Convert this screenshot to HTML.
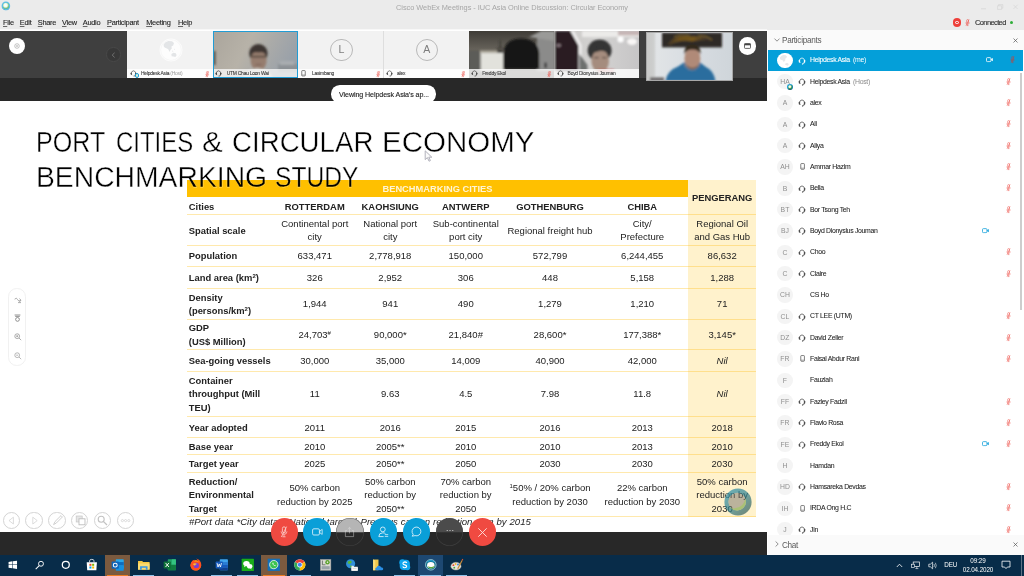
<!DOCTYPE html>
<html><head><meta charset="utf-8"><title>Cisco WebEx Meetings</title>
<style>

html,body{margin:0;padding:0;background:#fff;}
body{width:1024px;height:576px;overflow:hidden;font-family:"Liberation Sans",sans-serif;}
#root{filter:blur(0.45px);position:relative;width:1024px;height:576px;overflow:hidden;background:#fff;}
.abs{position:absolute;}
svg{display:block;overflow:visible;}


#titlebar{left:0;top:0;width:1024px;height:30px;background:#ebebeb;}
#wtitle{left:0;top:2.5px;width:1024px;text-align:center;font-size:7.4px;color:#a6a6a6;letter-spacing:-0.05px;}
#menu{left:0;top:17.5px;font-size:7.4px;color:#1e1e1e;white-space:nowrap;letter-spacing:-0.28px;-webkit-text-stroke:0.1px #1e1e1e;}
#menu span{position:absolute;top:0;}
#menu u{text-decoration-thickness:0.45px;text-underline-offset:0.5px;text-decoration-color:#666;}
#conn{left:975px;top:17.6px;font-size:7.5px;color:#333;letter-spacing:-0.62px;white-space:nowrap;-webkit-text-stroke:0.12px #333;}
#rec{left:952.6px;top:18.2px;width:8.4px;height:8.4px;border-radius:50%;background:#ee3f3a;}
#rec:after{content:"";position:absolute;left:2.7px;top:2.7px;width:1.6px;height:1.6px;border-radius:50%;border:0.7px solid #fff;}
#gdot{left:1010.3px;top:20.9px;width:3px;height:3px;border-radius:50%;background:#2fae3a;}


#vstrip{left:0;top:30.5px;width:767px;height:47.8px;background:#3f3f3f;}
#vhl{left:0;top:29.4px;width:767px;height:1.1px;background:#f7f7f7;}
#vdark{left:0;top:78.2px;width:767px;height:22.6px;background:#282828;}
.tile{top:30.5px;height:47.7px;background:#f2f2f2;overflow:hidden;}
.tile .nb{position:absolute;left:0;bottom:0;width:100%;height:9.2px;background:#fdfdfd;}
.tile .nbv{position:absolute;left:0;bottom:0;width:100%;height:9.6px;background:rgba(255,255,255,0.72);}
.tile .tn{position:absolute;left:13.8px;bottom:1.5px;font-size:4.95px;line-height:6px;color:#333;white-space:nowrap;letter-spacing:-0.24px;-webkit-text-stroke:0.08px #333;}
.tile .tn em{font-style:normal;color:#999;-webkit-text-stroke:0;}
.tile svg{position:absolute;}
.ring{position:absolute;border-radius:50%;border:0.6px solid #b9b9b9;width:20.4px;height:20.4px;left:32px;top:8.6px;text-align:center;font-size:10.6px;line-height:19.6px;color:#7d7d7d;}
#lcirc{left:8.6px;top:37.5px;width:16.8px;height:16.8px;border-radius:50%;background:#fff;}
#rcirc{left:738.6px;top:37.2px;width:17.4px;height:17.4px;border-radius:50%;background:#fff;}
#chev{left:106.4px;top:47.4px;width:12.6px;height:12.6px;border-radius:50%;background:#383838;border:0.6px solid #484848;}
#pill{left:330.6px;top:85.3px;width:105.8px;height:17.5px;border-radius:8.8px;background:#fff;box-shadow:0 0 1px rgba(0,0,0,0.25);}
#pill div{position:absolute;left:8.2px;top:4.6px;transform:translateY(0.6px) rotate(0.001deg);font-size:7.1px;line-height:8px;color:#222;white-space:nowrap;letter-spacing:-0.08px;-webkit-text-stroke:0.12px #222;}


#slide{left:0;top:100.6px;width:767px;height:432px;background:#fff;}
#stitle{left:35.6px;top:123.5px;font-size:29px;line-height:34.6px;color:#111;white-space:nowrap;transform-origin:0 0;}
#stitle div{transform-origin:0 0;}


#tbl{left:0;top:0;font-size:9.5px;color:#222;}
#tbl .hd{left:187px;top:180px;width:501px;height:17.2px;background:#ffc000;color:#fff5d6;font-weight:bold;text-align:center;line-height:19px;font-size:9.3px;}
#tbl .pcol{left:688px;top:180px;width:68.3px;height:336.5px;background:#fff2cc;}
#tbl .ln{left:187px;width:569.3px;height:1.1px;background:#ffe9ad;}
#tbl .lnp{left:688px;width:68.3px;height:1.1px;background:#ffdf8c;}
#tbl .r{left:187px;width:569.3px;}
#tbl .c{position:absolute;top:0;height:100%;box-sizing:border-box;padding-top:1.1px;display:flex;align-items:center;justify-content:center;text-align:center;line-height:13.5px;white-space:nowrap;}
#tbl .l{position:absolute;top:0;left:1.8px;height:100%;box-sizing:border-box;padding-top:1.1px;font-size:9.4px;display:flex;align-items:center;font-weight:bold;line-height:13.5px;white-space:nowrap;}
#tbl .b{font-weight:bold;font-size:9.4px;}
#tbl sup{font-size:6px;line-height:0;vertical-align:3.2px;}
#tbl i{font-style:italic;}
#foot{left:189px;top:515.6px;font-size:9.6px;word-spacing:0.25px;font-style:italic;color:#222;white-space:nowrap;line-height:12px;}


.stt{left:0;top:0;font-size:29.6px;line-height:34.7px;color:#000;white-space:nowrap;-webkit-text-stroke:0.42px #fff;}
.stt span{position:absolute;transform-origin:0 0;display:block;}
#stclip{left:187px;top:180px;width:501px;height:17.2px;overflow:hidden;}
#stclip .stt{left:-187px;top:-180px;-webkit-text-stroke:0.42px #ffc000;}


#panel{left:767.6px;top:30px;width:256.4px;height:525px;background:#fff;}
#phead{left:767.6px;top:30px;width:256.4px;height:19.7px;background:#fafafa;}
#phead .t,#chead .t{position:absolute;left:14.6px;top:5.2px;transform:translateY(1.2px) rotate(0.001deg);font-size:8.2px;color:#5a5a5a;letter-spacing:-0.3px;white-space:nowrap;}
#chead{left:767.6px;top:535.3px;width:256.4px;height:19.5px;background:#fafafa;}
#prow0{left:768.4px;top:49.7px;width:254.8px;height:21.1px;background:#049fd9;}
#pscroll{left:1020px;top:73px;width:2.2px;height:237px;background:#cdcdcd;}
.pr{left:768px;width:252px;height:21.33px;}
.pr .av{position:absolute;left:9.2px;top:2.9px;width:15.6px;height:15.6px;border-radius:50%;background:#f4f4f4;color:#8e8e8e;font-size:6.8px;line-height:16px;text-align:center;letter-spacing:0.1px;}
.pr .nm{position:absolute;left:41.8px;top:6.6px;transform:translateY(0.15px) rotate(0.001deg);font-size:6.9px;line-height:8px;color:#1c1c1c;white-space:nowrap;letter-spacing:-0.3px;-webkit-text-stroke:0.06px #1c1c1c;}
.pr .nm em{font-style:normal;color:#8a8a8a;-webkit-text-stroke:0;margin-left:1.6px;}
.pr svg{position:absolute;}
.pr .hs{left:29.6px;top:7.1px;}
.pr .ph{left:31.6px;top:7px;}
.pr .mic{left:238.4px;top:6.8px;}
.pr .cam{left:217.6px;top:7.8px;}
.sel .nm{color:#fff;-webkit-text-stroke:0.1px #fff;}
.sel .nm em{color:#fff;}


#bdark{left:0;top:532.3px;width:767px;height:23px;background:#282828;}
#taskbar{left:0;top:554.7px;width:1024px;height:22px;background:#082c49;}
.cb{top:518px;width:27.6px;height:27.6px;border-radius:50%;}
.cb svg{position:absolute;}
.tc{top:512px;width:17.2px;height:17.2px;border-radius:50%;border:0.7px solid #d4d4d4;box-sizing:border-box;}
.tc svg{position:absolute;left:0;top:0;}
#lpill{left:8.3px;top:287.8px;width:17.4px;height:78.4px;border-radius:8.7px;border:0.7px solid #f1f1f1;box-sizing:border-box;background:#fff;}
#lpill svg{position:absolute;}
.tb{position:absolute;top:0;height:21.3px;width:25.4px;}
.tb .ul{position:absolute;left:2.2px;right:2.2px;bottom:0;height:1.2px;background:#8fc3ea;}
.tb svg{position:absolute;left:5.9px;top:3.2px;}
#tray{color:#fff;font-size:6.3px;white-space:nowrap;letter-spacing:-0.1px;}
#tray div{position:absolute;text-align:center;}

</style></head>
<body>
<div id="root">

<div id="titlebar" class="abs"></div>
<div id="wtitle" class="abs">Cisco WebEx Meetings - IUC Asia Online Discussion: Circular Economy</div>
<svg class="abs" style="left:1px;top:1px" width="10" height="10" viewBox="0 0 10 10"><defs><radialGradient id="wb" cx="0.45" cy="0.4" r="0.6"><stop offset="0" stop-color="#fff"/><stop offset="0.45" stop-color="#f4fbf0"/><stop offset="0.75" stop-color="#a9d89a"/><stop offset="1" stop-color="#5fae4e"/></radialGradient></defs><circle cx="4.9" cy="4.9" r="4.3" fill="#5bbfe8"/><path d="M0.8 6A4.3 4.3 0 0 0 9 6.4Q7 9.2 4.6 9.2Q2 9 0.8 6Z" fill="#2f8fb8" opacity="0.7"/><circle cx="4.9" cy="4.8" r="3" fill="url(#wb)"/></svg>
<div id="menu" class="abs"><span style="left:3px"><u>F</u>ile</span><span style="left:19.8px"><u>E</u>dit</span><span style="left:37.8px"><u>S</u>hare</span><span style="left:62px"><u>V</u>iew</span><span style="left:82.8px"><u>A</u>udio</span><span style="left:107px"><u>P</u>articipant</span><span style="left:146.2px"><u>M</u>eeting</span><span style="left:178px"><u>H</u>elp</span></div>
<div id="rec" class="abs"></div><svg class="abs" style="left:965px;top:18.6px;color:#ee4f48" width="5" height="7.5"><use href="#mic"/></svg><div id="conn" class="abs">Connected</div><div id="gdot" class="abs"></div>
<svg class="abs" style="left:980px;top:3px" width="40" height="9"><path d="M1 5.8H6" stroke="#d2d2d2" stroke-width="0.7"/><path d="M17.6 2.8H21.6V6.4H17.6ZM18.6 2.8V1.6H22.8V5.2H21.6" fill="none" stroke="#d2d2d2" stroke-width="0.6"/><path d="M33.4 1.8L37.6 6M37.6 1.8L33.4 6" stroke="#d2d2d2" stroke-width="0.6"/></svg>

<div id="vhl" class="abs"></div><div id="vstrip" class="abs"></div><div id="vdark" class="abs"></div>
<div id="lcirc" class="abs"><svg style="position:absolute;left:5.4px;top:5.4px" width="6" height="6"><circle cx="3" cy="3" r="2.3" fill="none" stroke="#8a8a8a" stroke-width="0.5"/><circle cx="3" cy="3" r="0.7" fill="none" stroke="#8a8a8a" stroke-width="0.4"/></svg></div>
<div id="chev" class="abs"><svg style="position:absolute;left:3.8px;top:3.2px" width="5" height="6"><path d="M3.6 0.8L1.2 3.1L3.6 5.4" fill="none" stroke="#777" stroke-width="0.9"/></svg></div>
<div class="tile abs" style="left:127.2px;width:85.4px"><svg style="left:31.4px;top:7.1px" width="24" height="24" viewBox="0 0 24 24"><circle cx="12" cy="12" r="11.1" fill="#f6f6f6" stroke="#fdfdfd" stroke-width="0.7"/><circle cx="12" cy="12" r="9.9" fill="#fdfdfd"/><path d="M4.6 6.6Q6 3.6 9.4 2.9L13 3.2L15 5L14.2 7.4L12.4 8.6L12.8 10.6L11.4 12L10.6 14L9.4 11.6L8 10.4L6 9.8L4.8 8.4Z M12.4 16L14.4 14.8L16.8 15.2L17.6 17.2L16.4 19L14.4 18.4L12.6 18.2Z M12.8 12.4L14.4 13L13.8 14Z M15 10.6L16 11.4L15.2 12Z" fill="#e3e5e7"/></svg><div class="nb"></div><svg style="left:2.4px;bottom:1.2px;color:#444" width="7" height="7"><use href="#hs"/></svg><div style="position:absolute;left:7.4px;bottom:0.6px;width:2.6px;height:2.6px;border-radius:50%;background:#dff0d8;border:0.9px solid #1b9fd8"></div><div class="tn">Helpdesk Asia <em>(Host)</em></div><svg style="left:77.8px;bottom:0.9px;color:#ee5a52" width="4.4" height="6.6"><use href="#mic"/></svg></div>
<div class="tile abs" style="left:212.9px;width:85.3px;background:#a9a8a4"><svg style="left:0;top:0" width="85.3" height="48" viewBox="0 0 85.3 48"><defs><filter id="b1" x="-10%" y="-10%" width="120%" height="120%"><feGaussianBlur stdDeviation="0.9"/></filter><filter id="b2" x="-10%" y="-10%" width="120%" height="120%"><feGaussianBlur stdDeviation="1.6"/></filter><linearGradient id="g2" x1="0" y1="0" x2="1" y2="0.3"><stop offset="0" stop-color="#aaa59c"/><stop offset="0.45" stop-color="#b7b2a8"/><stop offset="1" stop-color="#9aa1a9"/></linearGradient></defs><rect width="85.3" height="48" fill="url(#g2)"/><g filter="url(#b1)"><rect x="0" y="20" width="2.6" height="14" fill="#55564f"/><rect x="65" y="33" width="20" height="8" fill="#8d9296"/><rect x="67" y="30" width="14" height="4" fill="#a9adb0"/><ellipse cx="45.4" cy="22.4" rx="9.2" ry="9.4" fill="#3c3632"/><ellipse cx="45.6" cy="29.6" rx="8" ry="10.4" fill="#967d6e"/><path d="M37.4 22.6Q40 18.4 45.6 19Q51.4 18.4 53.8 22.6Q49 20.6 45.6 21.4Q41 20.8 37.4 22.6Z" fill="#3c3632"/><rect x="38.6" y="24.8" width="14" height="1.7" fill="#4c3f38" opacity="0.85"/><path d="M42.6 33.6H48.6" stroke="#6e5148" stroke-width="1" opacity="0.7"/><path d="M30 48Q32 38 44 37Q58 38 60 48Z" fill="#c9c6c0"/></g></svg><div class="nbv"></div><svg style="left:2.2px;bottom:1.2px;color:#333" width="7" height="7"><use href="#hs"/></svg><div class="tn">UTM Chau Loon Wai</div><div style="position:absolute;left:0;top:0;right:0;bottom:0;border:1.3px solid #219cd5"></div></div>
<div class="tile abs" style="left:298.2px;width:85.1px;border-right:0.5px solid #dedede"><div class="ring">L</div><div class="nb"></div><svg style="left:2.4px;bottom:1.2px;color:#444" width="5" height="6.8"><use href="#ph"/></svg><div class="tn" style="left:13.8px">Lasimbang</div><svg style="left:77.4px;bottom:0.9px;color:#ee5a52" width="4.4" height="6.6"><use href="#mic"/></svg></div>
<div class="tile abs" style="left:383.7px;width:85.1px"><div class="ring">A</div><div class="nb"></div><svg style="left:2.2px;bottom:1.2px;color:#444" width="7" height="7"><use href="#hs"/></svg><div class="tn" style="left:13.4px">alex</div><svg style="left:77.4px;bottom:0.9px;color:#ee5a52" width="4.4" height="6.6"><use href="#mic"/></svg></div>
<div class="tile abs" style="left:468.8px;width:85.4px;background:#6d695f"><svg style="left:0;top:0" width="85.4" height="48" viewBox="0 0 85.4 48"><defs><linearGradient id="g5" x1="0" y1="0" x2="0" y2="1"><stop offset="0" stop-color="#3f3c37"/><stop offset="0.38" stop-color="#66625a"/><stop offset="0.5" stop-color="#5c5952"/><stop offset="1" stop-color="#4a4845"/></linearGradient></defs><rect width="85.4" height="48" fill="url(#g5)"/><g filter="url(#b1)"><rect x="0" y="20" width="11" height="20" fill="#5c5c59"/><rect x="11.6" y="22" width="23" height="18" fill="#e2e2dc"/><rect x="11" y="19.6" width="25" height="2.2" fill="#b9b4a6"/><rect x="68" y="6" width="18" height="34" fill="#8b8b8a"/><path d="M60 6L72 0H86V10Z" fill="#9a9a98"/><path d="M31.2 9V16M27.4 19L31.2 16L35.8 19" stroke="#3c3934" stroke-width="1.3" fill="none"/><ellipse cx="31.2" cy="20.4" rx="3.2" ry="1.6" fill="#3f3c38"/><path d="M34.4 38V22Q35.4 8 52 7.6Q68.6 8 70.2 22V38Z" fill="#171615"/><rect x="75.4" y="31.6" width="2.4" height="5.4" fill="#3c3c3c"/></g></svg><div class="nbv" style="background:rgba(255,255,255,0.8)"></div><svg style="left:2.4px;bottom:1.2px;color:#444" width="7" height="7"><use href="#hs"/></svg><div class="tn" style="left:13.4px;color:#444">Freddy Ekol</div><svg style="left:78.2px;bottom:0.9px;color:#ee5a52" width="4.4" height="6.6"><use href="#mic"/></svg></div>
<div class="tile abs" style="left:554.2px;width:85.3px;background:#d6d4d2"><svg style="left:0;top:0" width="85.3" height="48" viewBox="0 0 85.3 48"><defs><linearGradient id="g6" x1="0" y1="0" x2="1" y2="0"><stop offset="0" stop-color="#c6c4c2"/><stop offset="0.5" stop-color="#d4d3d2"/><stop offset="1" stop-color="#c6c5c6"/></linearGradient></defs><rect width="85.3" height="48" fill="url(#g6)"/><g filter="url(#b1)"><rect x="0" y="0" width="1" height="40" fill="#a9a9a7"/><path d="M1 0H16.4L24.6 14.6V40H1Z" fill="#2a1d22"/><ellipse cx="4.6" cy="14.4" rx="2.6" ry="1.8" fill="#8c7d84" opacity="0.8"/><path d="M16.4 0H20L27.6 14V40H24.6V14.6Z" fill="#efeeee"/><path d="M25.4 40V23L33.4 34V40Z" fill="#6d6f6e"/><rect x="28" y="0" width="57" height="6" fill="#ecebe9"/><ellipse cx="66.6" cy="8.6" rx="3.2" ry="3" fill="#fff"/><ellipse cx="78" cy="10.6" rx="5" ry="3.4" fill="#f8f6f5"/><rect x="64" y="0" width="22" height="4.4" fill="#b9a3a3" opacity="0.75"/><ellipse cx="45.6" cy="19.6" rx="12" ry="11" fill="#343435"/><ellipse cx="46.2" cy="30" rx="8.8" ry="11.6" fill="#a58c7e"/><path d="M36.6 23Q38 15.4 46 15.6Q54 15.4 55.4 23Q50 18.4 44 20.4Q40 21 36.6 23Z" fill="#343435"/><path d="M40.2 26.6H44.6M48.2 26.6H52.4" stroke="#4a3c36" stroke-width="1.2" opacity="0.8"/><rect x="44" y="38" width="16" height="4" fill="#c7595a" opacity="0.6"/></g></svg><div class="nbv" style="background:rgba(255,255,255,0.8)"></div><svg style="left:2.4px;bottom:1.2px;color:#444" width="7" height="7"><use href="#hs"/></svg><div class="tn" style="left:13.4px;color:#3c3c3c">Boyd Dionysius Jouman</div></div>
<div class="abs" style="left:645.8px;top:31.9px;width:87.4px;height:49.2px;background:#dcdfe2;overflow:hidden"><svg style="position:absolute;left:0;top:0" width="87.4" height="49.2" viewBox="0 0 87.4 49.2"><defs><linearGradient id="g7" x1="0" y1="0" x2="1" y2="0"><stop offset="0" stop-color="#c9cbcc"/><stop offset="0.12" stop-color="#e1e4e6"/><stop offset="0.5" stop-color="#d8dde2"/><stop offset="1" stop-color="#cfd5da"/></linearGradient><linearGradient id="g7b" x1="0" y1="0" x2="1" y2="0"><stop offset="0" stop-color="#3b3128"/><stop offset="0.25" stop-color="#6d521f"/><stop offset="0.55" stop-color="#75571e"/><stop offset="0.8" stop-color="#43362a"/><stop offset="1" stop-color="#2c2826"/></linearGradient></defs><rect width="87.4" height="49.2" fill="url(#g7)"/><g filter="url(#b1)"><rect x="0" y="0" width="9" height="48" fill="#c4c4c3" opacity="0.6"/><rect x="16" y="0.6" width="60" height="14.8" fill="#2e2a28"/><path d="M21 12Q30 2 44 4.6Q58 2.6 69 9.6Q58 7 46 9.4Q33 7 24 13.4Z" fill="url(#g7b)"/><path d="M28 5Q36 1.6 44 4M52 4Q60 3 66 8" stroke="#b08a2e" stroke-width="1.1" fill="none" opacity="0.6"/><rect x="4" y="45.4" width="14" height="3.8" fill="#6d6a6c"/><path d="M19.4 49.2Q21 38.6 32 34.6L38 30.6H54L60 35Q68 38.6 69.6 49.2Z" fill="#2c6d9e"/><path d="M37.6 33Q46 44 54.4 33L52 30H40Z" fill="#6f7f92"/><ellipse cx="46.4" cy="26.4" rx="8" ry="10.4" fill="#b08a78"/><path d="M38.2 22.4Q38 12.4 46.4 12.6Q55 12.4 54.6 22.4Q52 17.4 46.4 17.6Q40.6 17.4 38.2 22.4Z" fill="#33291f"/><path d="M40.6 33Q46.4 38.6 52.4 33Q52 36.4 46.4 37.4Q41 36.4 40.6 33Z" fill="#6b5144" opacity="0.8"/></g></svg><div style="position:absolute;left:0;top:0;right:0;bottom:0;border:0.8px solid #a8a8a8"></div></div>
<div id="rcirc" class="abs"><svg style="position:absolute;left:5.2px;top:5.6px" width="7" height="6"><rect x="0.5" y="0.6" width="6" height="4.8" rx="0.7" fill="none" stroke="#444" stroke-width="0.8"/><rect x="0.5" y="0.6" width="6" height="1.7" fill="#444"/></svg></div>
<div id="pill" class="abs"><div>Viewing Helpdesk Asia's ap...</div></div>

<div id="slide" class="abs"></div>

<div id="tbl" class="abs">
<div class="abs pcol"></div>
<div class="abs hd">BENCHMARKING CITIES</div>
<div class="abs c b" style="left:688px;top:180px;width:68.3px;height:34.5px;">PENGERANG</div>
<div class="abs r" style="top:197.2px;height:17.3px"><div class="l"><span>Cities</span></div><div class="c" style="left:90px;width:75.5px"><span><span class="b">ROTTERDAM</span></span></div><div class="c" style="left:165.5px;width:75.5px"><span><span class="b">KAOHSIUNG</span></span></div><div class="c" style="left:241px;width:75.5px"><span><span class="b">ANTWERP</span></span></div><div class="c" style="left:316.5px;width:93px"><span><span class="b">GOTHENBURG</span></span></div><div class="c" style="left:409.5px;width:91.5px"><span><span class="b">CHIBA</span></span></div></div>
<div class="abs r" style="top:214.5px;height:30.5px"><div class="l"><span>Spatial scale</span></div><div class="c" style="left:90px;width:75.5px"><span>Continental port<br>city</span></div><div class="c" style="left:165.5px;width:75.5px"><span>National port<br>city</span></div><div class="c" style="left:241px;width:75.5px"><span>Sub-continental<br>port city</span></div><div class="c" style="left:316.5px;width:93px"><span>Regional freight hub</span></div><div class="c" style="left:409.5px;width:91.5px"><span>City/<br>Prefecture</span></div><div class="c" style="left:501px;width:68.3px"><span>Regional Oil<br>and Gas Hub</span></div></div>
<div class="abs r" style="top:245px;height:21px"><div class="l"><span>Population</span></div><div class="c" style="left:90px;width:75.5px"><span>633,471</span></div><div class="c" style="left:165.5px;width:75.5px"><span>2,778,918</span></div><div class="c" style="left:241px;width:75.5px"><span>150,000</span></div><div class="c" style="left:316.5px;width:93px"><span>572,799</span></div><div class="c" style="left:409.5px;width:91.5px"><span>6,244,455</span></div><div class="c" style="left:501px;width:68.3px"><span>86,632</span></div></div>
<div class="abs r" style="top:266px;height:22px"><div class="l"><span>Land area (km<sup>2</sup>)</span></div><div class="c" style="left:90px;width:75.5px"><span>326</span></div><div class="c" style="left:165.5px;width:75.5px"><span>2,952</span></div><div class="c" style="left:241px;width:75.5px"><span>306</span></div><div class="c" style="left:316.5px;width:93px"><span>448</span></div><div class="c" style="left:409.5px;width:91.5px"><span>5,158</span></div><div class="c" style="left:501px;width:68.3px"><span>1,288</span></div></div>
<div class="abs r" style="top:288px;height:31px"><div class="l"><span>Density<br>(persons/km<sup>2</sup>)</span></div><div class="c" style="left:90px;width:75.5px"><span>1,944</span></div><div class="c" style="left:165.5px;width:75.5px"><span>941</span></div><div class="c" style="left:241px;width:75.5px"><span>490</span></div><div class="c" style="left:316.5px;width:93px"><span>1,279</span></div><div class="c" style="left:409.5px;width:91.5px"><span>1,210</span></div><div class="c" style="left:501px;width:68.3px"><span>71</span></div></div>
<div class="abs r" style="top:319px;height:30.5px"><div class="l"><span>GDP<br>(US$ Million)</span></div><div class="c" style="left:90px;width:75.5px"><span>24,703<sup>#</sup></span></div><div class="c" style="left:165.5px;width:75.5px"><span>90,000*</span></div><div class="c" style="left:241px;width:75.5px"><span>21,840#</span></div><div class="c" style="left:316.5px;width:93px"><span>28,600*</span></div><div class="c" style="left:409.5px;width:91.5px"><span>177,388*</span></div><div class="c" style="left:501px;width:68.3px"><span>3,145*</span></div></div>
<div class="abs r" style="top:349.5px;height:21.5px"><div class="l"><span>Sea-going vessels</span></div><div class="c" style="left:90px;width:75.5px"><span>30,000</span></div><div class="c" style="left:165.5px;width:75.5px"><span>35,000</span></div><div class="c" style="left:241px;width:75.5px"><span>14,009</span></div><div class="c" style="left:316.5px;width:93px"><span>40,900</span></div><div class="c" style="left:409.5px;width:91.5px"><span>42,000</span></div><div class="c" style="left:501px;width:68.3px"><span><i>Nil</i></span></div></div>
<div class="abs r" style="top:371px;height:45px"><div class="l"><span>Container<br>throughput (Mill<br>TEU)</span></div><div class="c" style="left:90px;width:75.5px"><span>11</span></div><div class="c" style="left:165.5px;width:75.5px"><span>9.63</span></div><div class="c" style="left:241px;width:75.5px"><span>4.5</span></div><div class="c" style="left:316.5px;width:93px"><span>7.98</span></div><div class="c" style="left:409.5px;width:91.5px"><span>11.8</span></div><div class="c" style="left:501px;width:68.3px"><span><i>Nil</i></span></div></div>
<div class="abs r" style="top:416px;height:21.5px"><div class="l"><span>Year adopted</span></div><div class="c" style="left:90px;width:75.5px"><span>2011</span></div><div class="c" style="left:165.5px;width:75.5px"><span>2016</span></div><div class="c" style="left:241px;width:75.5px"><span>2015</span></div><div class="c" style="left:316.5px;width:93px"><span>2016</span></div><div class="c" style="left:409.5px;width:91.5px"><span>2013</span></div><div class="c" style="left:501px;width:68.3px"><span>2018</span></div></div>
<div class="abs r" style="top:437.5px;height:17.0px"><div class="l"><span>Base year</span></div><div class="c" style="left:90px;width:75.5px"><span>2010</span></div><div class="c" style="left:165.5px;width:75.5px"><span>2005**</span></div><div class="c" style="left:241px;width:75.5px"><span>2010</span></div><div class="c" style="left:316.5px;width:93px"><span>2010</span></div><div class="c" style="left:409.5px;width:91.5px"><span>2013</span></div><div class="c" style="left:501px;width:68.3px"><span>2010</span></div></div>
<div class="abs r" style="top:454.5px;height:17.5px"><div class="l"><span>Target year</span></div><div class="c" style="left:90px;width:75.5px"><span>2025</span></div><div class="c" style="left:165.5px;width:75.5px"><span>2050**</span></div><div class="c" style="left:241px;width:75.5px"><span>2050</span></div><div class="c" style="left:316.5px;width:93px"><span>2030</span></div><div class="c" style="left:409.5px;width:91.5px"><span>2030</span></div><div class="c" style="left:501px;width:68.3px"><span>2030</span></div></div>
<div class="abs r" style="top:472px;height:44.5px"><div class="l"><span>Reduction/<br>Environmental<br>Target</span></div><div class="c" style="left:90px;width:75.5px"><span>50% carbon<br>reduction by 2025</span></div><div class="c" style="left:165.5px;width:75.5px"><span>50% carbon<br>reduction by<br>2050**</span></div><div class="c" style="left:241px;width:75.5px"><span>70% carbon<br>reduction by<br>2050</span></div><div class="c" style="left:316.5px;width:93px"><span><span><sup>1</sup>50% / 20% carbon<br>reduction by 2030</span></span></div><div class="c" style="left:409.5px;width:91.5px"><span>22% carbon<br>reduction by 2030</span></div><div class="c" style="left:501px;width:68.3px"><span>50% carbon<br>reduction by<br>2030</span></div></div>
<div class="abs ln" style="top:214.0px"></div><div class="abs lnp" style="top:214.0px"></div><div class="abs ln" style="top:244.5px"></div><div class="abs lnp" style="top:244.5px"></div><div class="abs ln" style="top:265.5px"></div><div class="abs lnp" style="top:265.5px"></div><div class="abs ln" style="top:287.5px"></div><div class="abs lnp" style="top:287.5px"></div><div class="abs ln" style="top:318.5px"></div><div class="abs lnp" style="top:318.5px"></div><div class="abs ln" style="top:349.0px"></div><div class="abs lnp" style="top:349.0px"></div><div class="abs ln" style="top:370.5px"></div><div class="abs lnp" style="top:370.5px"></div><div class="abs ln" style="top:415.5px"></div><div class="abs lnp" style="top:415.5px"></div><div class="abs ln" style="top:437.0px"></div><div class="abs lnp" style="top:437.0px"></div><div class="abs ln" style="top:454.0px"></div><div class="abs lnp" style="top:454.0px"></div><div class="abs ln" style="top:471.5px"></div><div class="abs lnp" style="top:471.5px"></div><div class="abs ln" style="top:516.0px"></div><div class="abs lnp" style="top:516.0px"></div>
</div>
<div id="foot" class="abs">#Port data *City data **National target <sup style="font-size:6px;line-height:0;vertical-align:3px">1</sup> Previous carbon reduction plan by 2015</div>

<div class="stt abs"><span style="left:36.3px;top:124.9px;transform:scaleX(0.848)">PORT</span><span style="left:115.94px;top:124.9px;transform:scaleX(0.809)">CITIES</span><span style="left:201.95px;top:124.9px;transform:scaleX(1.05)">&amp;</span><span style="left:232.07px;top:124.9px;transform:scaleX(0.9346)">CIRCULAR</span><span style="left:382px;top:124.9px;transform:scaleX(0.9967)">ECONOMY</span><span style="left:36.1px;top:159.6px;transform:scaleX(0.956)">BENCHMARKING</span><span style="left:275.4px;top:159.6px;transform:scaleX(0.8316)">STUDY</span></div>
<div id="stclip" class="abs"><div class="stt abs"><span style="left:36.1px;top:159.6px;transform:scaleX(0.956)">BENCHMARKING</span><span style="left:275.4px;top:159.6px;transform:scaleX(0.8316)">STUDY</span></div></div>
<svg class="abs" style="left:424px;top:150.4px" width="10" height="13" viewBox="0 0 10 13"><path d="M1.2 0.8V9.6L3.4 7.6L5 11.2L6.4 10.6L4.8 7.2H7.8Z" fill="#fafafa" stroke="#a9a9b4" stroke-width="0.9" stroke-linejoin="round"/></svg>
<svg class="abs" style="left:723.6px;top:488.4px" width="28" height="28" viewBox="0 0 28 28"><defs><linearGradient id="bg1" x1="0.15" y1="0.1" x2="0.85" y2="0.9"><stop offset="0" stop-color="#2a8ea8"/><stop offset="0.5" stop-color="#2f7f8c"/><stop offset="1" stop-color="#345e58"/></linearGradient></defs><path fill-rule="evenodd" d="M14 0.4A13.6 13.6 0 1 0 14 27.6A13.6 13.6 0 1 0 14 0.4ZM13.2 4.8A8.8 8.8 0 1 1 13.2 22.4A8.8 8.8 0 1 1 13.2 4.8Z" fill="url(#bg1)" opacity="0.7"/><circle cx="13.2" cy="13.6" r="8.8" fill="#77736c" opacity="0.5"/><path d="M13.2 22.4A8.8 8.8 0 0 0 22 13.6Q22 11.6 21.2 10.4Q20.4 19 10 20.6Q7.4 20.6 5.6 18.2Q8 22.4 13.2 22.4Z" fill="#a3c765" opacity="0.7"/></svg>

<svg width="0" height="0" style="position:absolute"><defs>
<symbol id="hs" viewBox="0 0 8 8"><path d="M2.3 5.9A2.7 2.7 0 1 1 5.7 5.9" fill="none" stroke="currentColor" stroke-width="0.75"/><rect x="0.8" y="3" width="1.35" height="2.5" rx="0.55" fill="currentColor"/><rect x="5.85" y="3" width="1.35" height="2.5" rx="0.55" fill="currentColor"/><path d="M6.5 5.2Q6.4 6.9 4.7 6.9" fill="none" stroke="currentColor" stroke-width="0.65"/><circle cx="4.5" cy="6.9" r="0.55" fill="currentColor"/></symbol>
<symbol id="ph" viewBox="0 0 6 8"><rect x="0.9" y="0.6" width="4.2" height="6.6" rx="0.8" fill="none" stroke="currentColor" stroke-width="0.8"/><path d="M1 5.9H5" stroke="currentColor" stroke-width="0.5"/></symbol>
<symbol id="mic" viewBox="0 0 6 9"><rect x="2" y="0.7" width="2.2" height="4.4" rx="1.1" fill="none" stroke="currentColor" stroke-width="0.7"/><path d="M0.9 4.2Q1 6.4 3.1 6.4Q5.1 6.4 5.2 4.2M3.1 6.4V8M2 8H4.2" fill="none" stroke="currentColor" stroke-width="0.6"/><path d="M4.9 0.4L1.2 8" stroke="currentColor" stroke-width="0.7"/></symbol>
<symbol id="cam" viewBox="0 0 8 6"><rect x="0.5" y="0.7" width="4.8" height="4.4" rx="1" fill="none" stroke="currentColor" stroke-width="0.9"/><path d="M5.6 2.2L7.4 1.1V4.7L5.6 3.6Z" fill="currentColor"/></symbol>
</defs></svg>
<div id="panel" class="abs"></div><div id="prow0" class="abs"></div><div id="pscroll" class="abs"></div>
<div class="pr abs sel" style="top:49.67px"><div class="av" style="background:#fff"><svg width="15.6" height="15.6" viewBox="0 0 16 16" style="left:0;top:0"><path d="M3 4.6Q4.4 2.4 6.6 2L9 2.2L10.2 3.6L9.6 5.2L8.4 6L8.6 7.4L7.6 8.4L7 9.6L6.2 8L5.2 7.2L3.8 6.8L3 5.8Z M8.4 11L9.8 10.2L11.4 10.4L12 11.8L11.2 13L9.8 12.6L8.6 12.4Z" fill="#e6e8ea"/></svg></div><svg class="hs" width="8" height="8" style="color:#fff"><use href="#hs"/></svg><div class="nm">Helpdesk Asia <em>(me)</em></div><svg class="cam" width="7.4" height="5.5" style="color:#fff"><use href="#cam"/></svg><svg class="mic" width="5" height="7.5" style="color:#c4473f;left:242.2px"><use href="#mic"/></svg></div>
<div class="pr abs" style="top:71.0px"><div class="av">HA</div><div style="position:absolute;left:18.6px;top:12.9px;width:4.2px;height:4.2px;border-radius:50%;background:radial-gradient(circle at 45% 40%,#fff 0,#eaf6e0 30%,#5aa848 60%,#1c7a55 100%);border:1.1px solid #1b9fd8;border-bottom-color:#0e5c70;border-right-color:#137fa6"></div><svg class="hs" width="8" height="8" style="color:#4a4a4a"><use href="#hs"/></svg><div class="nm">Helpdesk Asia <em>(Host)</em></div><svg class="mic" width="5" height="7.5" style="color:#f0605a"><use href="#mic"/></svg></div>
<div class="pr abs" style="top:92.34px"><div class="av">A</div><svg class="hs" width="8" height="8" style="color:#4a4a4a"><use href="#hs"/></svg><div class="nm">alex</div><svg class="mic" width="5" height="7.5" style="color:#f0605a"><use href="#mic"/></svg></div>
<div class="pr abs" style="top:113.67px"><div class="av">A</div><svg class="hs" width="8" height="8" style="color:#4a4a4a"><use href="#hs"/></svg><div class="nm">Ali</div><svg class="mic" width="5" height="7.5" style="color:#f0605a"><use href="#mic"/></svg></div>
<div class="pr abs" style="top:135.0px"><div class="av">A</div><svg class="hs" width="8" height="8" style="color:#4a4a4a"><use href="#hs"/></svg><div class="nm">Aliya</div><svg class="mic" width="5" height="7.5" style="color:#f0605a"><use href="#mic"/></svg></div>
<div class="pr abs" style="top:156.33px"><div class="av">AH</div><svg class="ph" width="5.2" height="7" style="color:#4a4a4a"><use href="#ph"/></svg><div class="nm">Ammar Hazim</div><svg class="mic" width="5" height="7.5" style="color:#f0605a"><use href="#mic"/></svg></div>
<div class="pr abs" style="top:177.67px"><div class="av">B</div><svg class="hs" width="8" height="8" style="color:#4a4a4a"><use href="#hs"/></svg><div class="nm">Bella</div><svg class="mic" width="5" height="7.5" style="color:#f0605a"><use href="#mic"/></svg></div>
<div class="pr abs" style="top:199.0px"><div class="av">BT</div><svg class="hs" width="8" height="8" style="color:#4a4a4a"><use href="#hs"/></svg><div class="nm">Bor Tsong Teh</div><svg class="mic" width="5" height="7.5" style="color:#f0605a"><use href="#mic"/></svg></div>
<div class="pr abs" style="top:220.33px"><div class="av">BJ</div><svg class="hs" width="8" height="8" style="color:#4a4a4a"><use href="#hs"/></svg><div class="nm">Boyd Dionysius Jouman</div><svg class="cam" width="7.4" height="5.5" style="color:#1aa3dc;left:214px"><use href="#cam"/></svg></div>
<div class="pr abs" style="top:241.67px"><div class="av">C</div><svg class="hs" width="8" height="8" style="color:#4a4a4a"><use href="#hs"/></svg><div class="nm">Choo</div><svg class="mic" width="5" height="7.5" style="color:#f0605a"><use href="#mic"/></svg></div>
<div class="pr abs" style="top:263.0px"><div class="av">C</div><svg class="hs" width="8" height="8" style="color:#4a4a4a"><use href="#hs"/></svg><div class="nm">Claire</div><svg class="mic" width="5" height="7.5" style="color:#f0605a"><use href="#mic"/></svg></div>
<div class="pr abs" style="top:284.33px"><div class="av">CH</div><div class="nm">CS Ho</div></div>
<div class="pr abs" style="top:305.67px"><div class="av">CL</div><svg class="hs" width="8" height="8" style="color:#4a4a4a"><use href="#hs"/></svg><div class="nm">CT LEE (UTM)</div><svg class="mic" width="5" height="7.5" style="color:#f0605a"><use href="#mic"/></svg></div>
<div class="pr abs" style="top:327.0px"><div class="av">DZ</div><svg class="hs" width="8" height="8" style="color:#4a4a4a"><use href="#hs"/></svg><div class="nm">David Zeller</div><svg class="mic" width="5" height="7.5" style="color:#f0605a"><use href="#mic"/></svg></div>
<div class="pr abs" style="top:348.33px"><div class="av">FR</div><svg class="ph" width="5.2" height="7" style="color:#4a4a4a"><use href="#ph"/></svg><div class="nm">Faisal Abdur Rani</div><svg class="mic" width="5" height="7.5" style="color:#f0605a"><use href="#mic"/></svg></div>
<div class="pr abs" style="top:369.67px"><div class="av">F</div><div class="nm">Fauziah</div></div>
<div class="pr abs" style="top:391.0px"><div class="av">FF</div><svg class="hs" width="8" height="8" style="color:#4a4a4a"><use href="#hs"/></svg><div class="nm">Fazley Fadzil</div><svg class="mic" width="5" height="7.5" style="color:#f0605a"><use href="#mic"/></svg></div>
<div class="pr abs" style="top:412.33px"><div class="av">FR</div><svg class="hs" width="8" height="8" style="color:#4a4a4a"><use href="#hs"/></svg><div class="nm">Flavio Rosa</div><svg class="mic" width="5" height="7.5" style="color:#f0605a"><use href="#mic"/></svg></div>
<div class="pr abs" style="top:433.66px"><div class="av">FE</div><svg class="hs" width="8" height="8" style="color:#4a4a4a"><use href="#hs"/></svg><div class="nm">Freddy Ekol</div><svg class="cam" width="7.4" height="5.5" style="color:#1aa3dc;left:214px"><use href="#cam"/></svg><svg class="mic" width="5" height="7.5" style="color:#f0605a"><use href="#mic"/></svg></div>
<div class="pr abs" style="top:455.0px"><div class="av">H</div><div class="nm">Hamdan</div></div>
<div class="pr abs" style="top:476.33px"><div class="av">HD</div><svg class="hs" width="8" height="8" style="color:#4a4a4a"><use href="#hs"/></svg><div class="nm">Hamsareka Devdas</div><svg class="mic" width="5" height="7.5" style="color:#f0605a"><use href="#mic"/></svg></div>
<div class="pr abs" style="top:497.66px"><div class="av">IH</div><svg class="ph" width="5.2" height="7" style="color:#4a4a4a"><use href="#ph"/></svg><div class="nm">IRDA Ong H.C</div><svg class="mic" width="5" height="7.5" style="color:#f0605a"><use href="#mic"/></svg></div>
<div class="pr abs" style="top:519.0px"><div class="av">J</div><svg class="hs" width="8" height="8" style="color:#4a4a4a"><use href="#hs"/></svg><div class="nm">Jin</div><svg class="mic" width="5" height="7.5" style="color:#f0605a"><use href="#mic"/></svg></div>
<div id="phead" class="abs"><svg class="abs" style="left:6.2px;top:7.6px" width="6" height="4"><path d="M0.5 0.6L3 3.2L5.5 0.6" fill="none" stroke="#666" stroke-width="0.7"/></svg><div class="t">Participants</div><svg class="abs" style="left:245.3px;top:7.6px" width="5" height="5"><path d="M0.5 0.5L4.5 4.5M4.5 0.5L0.5 4.5" stroke="#555" stroke-width="0.7"/></svg></div>
<div id="chead" class="abs"><svg class="abs" style="left:7.4px;top:5.6px" width="4" height="6"><path d="M0.6 0.5L3.2 3L0.6 5.5" fill="none" stroke="#666" stroke-width="0.7"/></svg><div class="t">Chat</div><svg class="abs" style="left:245.3px;top:7.2px" width="5" height="5"><path d="M0.5 0.5L4.5 4.5M4.5 0.5L0.5 4.5" stroke="#555" stroke-width="0.7"/></svg></div>

<div id="bdark" class="abs"></div>
<div id="lpill" class="abs"><svg style="left:4.6px;top:8.6px" width="8" height="7" viewBox="0 0 8 7"><path d="M0.6 2.2Q2.6 0 3.6 2.6T6.8 3.2M5.4 1.6L7 3.2L5.4 5M4 5.6H7" fill="none" stroke="#8a8a8a" stroke-width="0.7"/></svg><svg style="left:5px;top:25.6px" width="7" height="8" viewBox="0 0 7 8"><path d="M0.6 1H6.4M1.2 2.4H5.8" stroke="#7a7a7a" stroke-width="0.8"/><circle cx="3.5" cy="5.4" r="1.9" fill="none" stroke="#7a7a7a" stroke-width="0.8"/></svg><svg style="left:4.8px;top:44.6px" width="8" height="8" viewBox="0 0 8 8"><circle cx="3.2" cy="3.2" r="2.4" fill="none" stroke="#8a8a8a" stroke-width="0.7"/><path d="M5 5L7.2 7.2M2.2 3.2H4.2M3.2 2.2V4.2" stroke="#8a8a8a" stroke-width="0.7"/></svg><svg style="left:4.8px;top:63.6px" width="8" height="8" viewBox="0 0 8 8"><circle cx="3.2" cy="3.2" r="2.4" fill="none" stroke="#9a9a9a" stroke-width="0.7"/><path d="M5 5L7.2 7.2M2.2 3.2H4.2" stroke="#9a9a9a" stroke-width="0.7"/></svg></div>
<div class="tc abs" style="left:2.65px"><svg width="17.2" height="17.2" viewBox="0 0 17.2 17.2" style="left:-0.7px;top:-0.7px"><path d="M10.4 5.2L6 8.6L10.4 12Z" fill="none" stroke="#cfcfcf" stroke-width="0.7"/></svg></div><div class="tc abs" style="left:25.4px"><svg width="17.2" height="17.2" viewBox="0 0 17.2 17.2" style="left:-0.7px;top:-0.7px"><path d="M6.8 5.2L11.2 8.6L6.8 12Z" fill="none" stroke="#cfcfcf" stroke-width="0.7"/></svg></div><div class="tc abs" style="left:48.4px"><svg width="17.2" height="17.2" viewBox="0 0 17.2 17.2" style="left:-0.7px;top:-0.7px"><path d="M4.6 12.6L6 9.6L12 3.6L13.4 5L7.4 11Z" fill="none" stroke="#c4c4c4" stroke-width="0.8"/></svg></div><div class="tc abs" style="left:71.2px"><svg width="17.2" height="17.2" viewBox="0 0 17.2 17.2" style="left:-0.7px;top:-0.7px"><rect x="4.2" y="4" width="6" height="6" fill="#e6e6e6" stroke="#c6c6c6" stroke-width="0.7"/><rect x="7" y="6.8" width="6" height="6" fill="#fff" stroke="#bdbdbd" stroke-width="0.9"/></svg></div><div class="tc abs" style="left:94.1px"><svg width="17.2" height="17.2" viewBox="0 0 17.2 17.2" style="left:-0.7px;top:-0.7px"><circle cx="7.2" cy="7.2" r="3" fill="none" stroke="#c2c2c2" stroke-width="1.1"/><path d="M9.6 9.6L13 13" stroke="#c2c2c2" stroke-width="1.3"/></svg></div><div class="tc abs" style="left:116.7px"><svg width="17.2" height="17.2" viewBox="0 0 17.2 17.2" style="left:-0.7px;top:-0.7px"><circle cx="5.4" cy="8.6" r="1.1" fill="none" stroke="#c9c9c9" stroke-width="0.6"/><circle cx="8.6" cy="8.6" r="1.1" fill="none" stroke="#c9c9c9" stroke-width="0.6"/><circle cx="11.8" cy="8.6" r="1.1" fill="none" stroke="#c9c9c9" stroke-width="0.6"/></svg></div>
<div class="cb abs" style="left:270.5px;background:#f04a41;"><svg style="left:9.8px;top:7.8px" width="8" height="12" viewBox="0 0 8 12"><rect x="2.4" y="0.8" width="3.2" height="6" rx="1.6" fill="none" stroke="#fbd5d2" stroke-width="0.8"/><path d="M1 5.4Q1.2 8.4 4 8.4Q6.8 8.4 7 5.4M4 8.4V10.8M2.4 10.8H5.6" fill="none" stroke="#fbd5d2" stroke-width="0.7"/><path d="M6.6 0.6L1.4 11" stroke="#fbd5d2" stroke-width="0.8"/></svg></div><div class="cb abs" style="left:303.2px;background:#0a9fd8;"><svg style="left:8.4px;top:9.6px" width="11" height="8" viewBox="0 0 11 8"><rect x="0.6" y="0.8" width="6.8" height="6.2" rx="1.2" fill="none" stroke="#d8eef9" stroke-width="0.9"/><path d="M7.8 3L10.2 1.4V6.4L7.8 4.8Z" fill="none" stroke="#d8eef9" stroke-width="0.8"/></svg></div><div class="cb abs" style="left:336.2px;background:rgba(150,150,150,0.55);box-shadow:inset 0 0 0 0.6px rgba(75,75,75,0.7);background:linear-gradient(to bottom,#b5b5b5 0,#b5b5b5 14.2px,#292929 14.6px)"><svg style="left:8.2px;top:7.6px" width="11" height="12" viewBox="0 0 11 12"><path d="M3 4.6H1.4V10.6H9.6V4.6H8" fill="none" stroke="rgba(225,225,225,0.55)" stroke-width="0.8"/><path d="M5.5 7.4V1.4M3.8 3L5.5 1.4L7.2 3" fill="none" stroke="rgba(225,225,225,0.55)" stroke-width="0.8"/></svg></div><div class="cb abs" style="left:369.5px;background:#0a9fd8;"><svg style="left:8.6px;top:8px" width="11" height="12" viewBox="0 0 11 12"><circle cx="4.8" cy="3.4" r="2.4" fill="none" stroke="#d8eef9" stroke-width="0.9"/><path d="M0.8 10.6Q0.8 6.8 4.8 6.8Q6.6 6.8 7.4 7.6" fill="none" stroke="#d8eef9" stroke-width="0.9"/><path d="M0.8 10.6H5.6" stroke="#d8eef9" stroke-width="0.9"/><path d="M6.8 8.6H10.2M6.8 10.4H10.2" stroke="#d8eef9" stroke-width="0.8"/></svg></div><div class="cb abs" style="left:402.5px;background:#0a9fd8;"><svg style="left:8.2px;top:8.4px" width="11" height="11" viewBox="0 0 11 11"><path d="M2.2 8.4A4.4 4.4 0 1 1 4 9.6L1.2 10.2Z" fill="none" stroke="#d8eef9" stroke-width="0.9"/></svg></div><div class="cb abs" style="left:435.7px;background:rgba(70,70,70,0.5);box-shadow:inset 0 0 0 0.6px rgba(75,75,75,0.7);background:linear-gradient(to bottom,#4b4b4b 0,#4b4b4b 14.2px,#292929 14.6px)"><svg style="left:9px;top:11.4px" width="10" height="3" viewBox="0 0 10 3"><circle cx="2.2" cy="1.5" r="0.55" fill="#e8e8e8"/><circle cx="5" cy="1.5" r="0.55" fill="#e8e8e8"/><circle cx="7.8" cy="1.5" r="0.55" fill="#e8e8e8"/></svg></div><div class="cb abs" style="left:468.7px;background:#f04a41;"><svg style="left:9.6px;top:9.6px" width="9" height="9" viewBox="0 0 9 9"><path d="M0.3 0.3L8.7 8.7M8.7 0.3L0.3 8.7" stroke="#fde3e1" stroke-width="0.9"/></svg></div>
<div id="taskbar" class="abs"><div class="tb" style="left:0.6px;"><svg width="13.6" height="13.6" viewBox="0 0 16 16"><path transform="translate(8 8) scale(0.78) translate(-8 -8)" d="M1.6 3.6L7.2 2.8V7.6H1.6ZM8 2.7L14.4 1.8V7.6H8ZM1.6 8.4H7.2V13.2L1.6 12.4ZM8 8.4H14.4V14.2L8 13.3Z" fill="#fff"/></svg></div><div class="tb" style="left:26.67px;"><svg width="13.6" height="13.6" viewBox="0 0 16 16"><circle cx="9.4" cy="6.8" r="2.9" fill="none" stroke="#fff" stroke-width="1.1"/><path d="M7.3 9L3.2 13" stroke="#fff" stroke-width="1.2"/></svg></div><div class="tb" style="left:52.74px;"><svg width="13.6" height="13.6" viewBox="0 0 16 16"><circle cx="8" cy="8" r="4.1" fill="none" stroke="#fff" stroke-width="1.5"/></svg></div><div class="tb" style="left:78.81px;"><svg width="13.6" height="13.6" viewBox="0 0 16 16"><path d="M5.4 5V3.4Q5.4 1.6 8 1.6Q10.6 1.6 10.6 3.4V5" fill="none" stroke="#fff" stroke-width="0.9"/><path d="M2 5H14L13.4 14.4H2.6Z" fill="#fff"/><rect x="5.2" y="6.8" width="2.4" height="2.4" fill="#f25022"/><rect x="8.4" y="6.8" width="2.4" height="2.4" fill="#7fba00"/><rect x="5.2" y="10" width="2.4" height="2.4" fill="#00a4ef"/><rect x="8.4" y="10" width="2.4" height="2.4" fill="#ffb900"/></svg></div><div class="tb" style="left:104.88px;background:#7b5a3f;"><svg width="13.6" height="13.6" viewBox="0 0 16 16"><rect x="5.6" y="1.6" width="9.4" height="11" rx="0.8" fill="#28a8ea"/><rect x="8" y="4.8" width="7" height="4" fill="#0f6cbd"/><path d="M5.6 9L15 9V14.2Q15 15 14.2 15H6.4Q5.6 15 5.6 14.2Z" fill="#1490df"/><rect x="0.8" y="4.2" width="8.4" height="8.4" rx="0.9" fill="#0f64b8"/><circle cx="5" cy="8.4" r="2.3" fill="none" stroke="#fff" stroke-width="1.2"/></svg><div class="ul" style="background:#ee7d22"></div></div><div class="tb" style="left:130.95px;"><svg width="13.6" height="13.6" viewBox="0 0 16 16"><path d="M1.2 3.4H6L7.2 4.8H14.8V13.6H1.2Z" fill="#f6c945"/><path d="M1.2 6.4H14.8V13.8H1.2Z" fill="#fbdc72"/><path d="M3.6 9.6H12.4V13.8H10.4V11.4H5.6V13.8H3.6Z" fill="#3b97e3"/></svg><div class="ul" style="background:#8fc3ea"></div></div><div class="tb" style="left:157.02px;"><svg width="13.6" height="13.6" viewBox="0 0 16 16"><rect x="5.6" y="1.6" width="9.6" height="12.8" rx="0.8" fill="#21a366"/><rect x="10.4" y="1.6" width="4.8" height="6.4" fill="#33c481"/><rect x="5.6" y="8" width="9.6" height="6.4" fill="#107c41"/><rect x="0.8" y="4" width="8.4" height="8.4" rx="0.9" fill="#0e7038"/><path d="M3 5.8L7 10.6M7 5.8L3 10.6" stroke="#fff" stroke-width="1.1"/></svg></div><div class="tb" style="left:183.09px;"><svg width="13.6" height="13.6" viewBox="0 0 16 16"><circle cx="8" cy="8.6" r="6.2" fill="#ff8a16"/><path d="M2.4 6Q3.4 2.6 6.4 2Q5.4 3.6 6.8 4.8Q9 3.6 11.6 5.2Q10.6 1.6 8.4 0.6Q13.4 1.6 14.4 7Q15 12.6 9.6 14.6Q3.4 15.6 1.8 9.6Q1.6 7.6 2.4 6Z" fill="#ff4f1f"/><circle cx="8.6" cy="8.8" r="3.1" fill="#7a3fd6"/><path d="M4.6 7Q7 5.4 9.6 7Q7.6 7.2 7 9Q5.4 8.6 4.6 7Z" fill="#ffbd2e"/></svg></div><div class="tb" style="left:209.16px;"><svg width="13.6" height="13.6" viewBox="0 0 16 16"><rect x="5.6" y="1.6" width="9.6" height="12.8" rx="0.8" fill="#41a5ee"/><rect x="5.6" y="4.8" width="9.6" height="3.2" fill="#2b7cd3"/><rect x="5.6" y="8" width="9.6" height="3.2" fill="#185abd"/><rect x="5.6" y="11.2" width="9.6" height="3.2" fill="#103f91"/><rect x="0.8" y="4" width="8.4" height="8.4" rx="0.9" fill="#175bbc"/><path d="M2.4 6L3.6 10.6L5 7L6.4 10.6L7.6 6" fill="none" stroke="#fff" stroke-width="1"/></svg><div class="ul" style="background:#8fc3ea"></div></div><div class="tb" style="left:235.23px;"><svg width="13.6" height="13.6" viewBox="0 0 16 16"><rect x="0.8" y="0.8" width="14.4" height="14.4" rx="0.6" fill="#1aad19"/><ellipse cx="6.4" cy="6.6" rx="3.8" ry="3.2" fill="#fff"/><ellipse cx="10.2" cy="9.8" rx="3.2" ry="2.7" fill="#fff"/><path d="M4 9L3.6 11L5.6 9.6Z M12 12L12.6 13.4L10.6 12.4Z" fill="#fff"/></svg><div class="ul" style="background:#8fc3ea"></div></div><div class="tb" style="left:261.3px;background:#7b5a3f;"><svg width="13.6" height="13.6" viewBox="0 0 16 16"><rect x="0.8" y="0.8" width="14.4" height="14.4" fill="#1570b8"/><circle cx="8" cy="7.8" r="4.9" fill="#3cc350"/><path d="M3.4 13L4.2 10L6.4 12.2Z" fill="#3cc350"/><circle cx="8" cy="7.8" r="4.9" fill="none" stroke="#fff" stroke-width="0.9"/><path d="M6.2 5.8Q6 8.2 9.6 9.8L10.4 8.8L9.2 8.2L8.6 8.6Q7.6 8 7.4 7.2L7.8 6.6L7.2 5.4Z" fill="#fff"/></svg><div class="ul" style="background:#ee7d22"></div></div><div class="tb" style="left:287.37px;"><svg width="13.6" height="13.6" viewBox="0 0 16 16"><circle cx="8" cy="8" r="6.6" fill="#fff"/><path d="M8 8L2.3 4.7A6.6 6.6 0 0 1 13.7 4.7Z" fill="#ea4335"/><path d="M8 8L13.7 4.7A6.6 6.6 0 0 1 8 14.6Z" fill="#fbbc05"/><path d="M8 8L8 14.6A6.6 6.6 0 0 1 2.3 4.7Z" fill="#34a853"/><circle cx="8" cy="8" r="3.1" fill="#fff"/><circle cx="8" cy="8" r="2.4" fill="#4285f4"/></svg><div class="ul" style="background:#8fc3ea"></div></div><div class="tb" style="left:313.44px;"><svg width="13.6" height="13.6" viewBox="0 0 16 16"><rect x="1.6" y="1.6" width="12.4" height="13" fill="#d9d9d4" stroke="#8c8c86" stroke-width="0.6"/><rect x="3" y="9.6" width="9.6" height="3.8" fill="#9aa3a8"/><path d="M4 3V8H7.6" stroke="#5e6a60" stroke-width="1" fill="none"/><circle cx="10" cy="5" r="2.6" fill="#5aa02c"/><path d="M9 5H11M10 4V6" stroke="#fff" stroke-width="0.7"/></svg></div><div class="tb" style="left:339.51px;"><svg width="13.6" height="13.6" viewBox="0 0 16 16"><circle cx="6.6" cy="6.8" r="5.4" fill="#2f8fd8"/><path d="M3 4.6Q5 2.6 7.6 3.6Q8.6 5.6 6.6 6.6Q4.4 7.6 3.4 6.2Z M6 9Q8 8.4 8.6 10.4Q7.4 11.8 6 11Z" fill="#58b63a"/><path d="M7.6 9.2H10L10.8 10.2H15V15H7.6Z" fill="#e9e9e6"/><path d="M7.6 11H15V15H7.6Z" fill="#fafaf8"/><path d="M9 12.4H13.6" stroke="#b9b9b4" stroke-width="0.6"/></svg></div><div class="tb" style="left:365.58px;"><svg width="13.6" height="13.6" viewBox="0 0 16 16"><path d="M2.4 1.8H8.8V14.4H2.4Z" fill="#f2c84b"/><path d="M2.4 1.8L5 3V14.4H2.4Z" fill="#f9dc7a"/><path d="M6.6 14.4Q5 14.4 5 12.8Q5 11.4 6.6 11.2Q7 9.2 9.2 9.2Q11 9.2 11.8 10.8Q14.4 10.8 14.4 12.6Q14.4 14.4 12.6 14.4Z" fill="#2a8fe6"/></svg></div><div class="tb" style="left:391.65px;"><svg width="13.6" height="13.6" viewBox="0 0 16 16"><rect x="2" y="2" width="12" height="12" rx="4.6" fill="#0ea5ee"/><circle cx="5" cy="5" r="3.4" fill="#0ea5ee"/><circle cx="11" cy="11" r="3.4" fill="#0ea5ee"/><path d="M10.4 5.8Q9.6 4.6 8 4.6Q5.8 4.8 5.8 6.4Q5.8 7.6 8 8.1Q10.2 8.6 10.2 9.8Q10.2 11.4 8 11.4Q6.2 11.4 5.6 10" fill="none" stroke="#fff" stroke-width="1.3"/></svg><div class="ul" style="background:#8fc3ea"></div></div><div class="tb" style="left:417.72px;background:#1d4872;"><svg width="13.6" height="13.6" viewBox="0 0 16 16"><circle cx="8" cy="8" r="6.6" fill="#0d6a86"/><circle cx="8" cy="8" r="6.2" fill="none" stroke="#dff2fb" stroke-width="0.7"/><path d="M2.6 8A5.4 5.4 0 0 1 13.4 8A5.4 4.2 0 0 0 2.6 8Z" fill="#24b2ec"/><ellipse cx="8" cy="8.6" rx="4.4" ry="3.8" fill="#fff"/><path d="M8 12.4A4.4 3.8 0 0 0 12.4 8.6Q11.6 11 8 10.6Q5.6 10.6 4.4 9.8Q5 12.4 8 12.4Z" fill="#5aaa3c"/></svg><div class="ul" style="background:#8fc3ea"></div></div><div class="tb" style="left:443.79px;"><svg width="13.6" height="13.6" viewBox="0 0 16 16"><ellipse cx="7" cy="9.6" rx="6" ry="4.6" fill="#e9e4da"/><ellipse cx="7" cy="9.6" rx="6" ry="4.6" fill="none" stroke="#a7a196" stroke-width="0.5"/><circle cx="4" cy="8.4" r="1.1" fill="#e5452f"/><circle cx="6.6" cy="7" r="1.1" fill="#f2b530"/><circle cx="9.4" cy="7.6" r="1.1" fill="#3a82d8"/><circle cx="5" cy="11.4" r="1.1" fill="#47a544"/><path d="M8.4 12.4L13.6 2.6L14.8 3.2L9.8 13Z" fill="#c98d3c"/><path d="M13.6 2.6L14.6 0.8L15.6 1.4L14.8 3.2Z" fill="#e05a2b"/></svg><div class="ul" style="background:#8fc3ea"></div></div><div id="tray" class="abs" style="left:0;top:0"><svg class="abs" style="left:896px;top:8.4px" width="7" height="5"><path d="M0.8 4L3.5 1.2L6.2 4" fill="none" stroke="#fff" stroke-width="0.8"/></svg><svg class="abs" style="left:911px;top:6.4px" width="9" height="9" viewBox="0 0 9 9"><rect x="2.2" y="1" width="6.2" height="4.6" fill="none" stroke="#fff" stroke-width="0.7"/><rect x="0.6" y="3.2" width="3" height="3.4" fill="#082c49" stroke="#fff" stroke-width="0.6"/><path d="M4.4 7.6H7.4M5.8 5.6V7.6" stroke="#fff" stroke-width="0.6"/></svg><svg class="abs" style="left:927.6px;top:6.2px" width="10" height="9" viewBox="0 0 10 9"><path d="M0.8 3.2H2.4L4.6 1.2V7.8L2.4 5.8H0.8Z" fill="none" stroke="#fff" stroke-width="0.7"/><path d="M6 3Q6.8 4.5 6 6M7.4 1.8Q9 4.5 7.4 7.2" fill="none" stroke="#fff" stroke-width="0.6"/></svg><div style="left:943.8px;top:6.8px;width:14px;">DEU</div><div style="left:962px;top:2.2px;width:32px;">09:29</div><div style="left:962px;top:11.3px;width:32px;">02.04.2020</div><svg class="abs" style="left:1001px;top:5.4px" width="10" height="10" viewBox="0 0 10 10"><path d="M1 1.2H9V7H6.4L5 8.6L3.6 7H1Z" fill="none" stroke="#fff" stroke-width="0.8"/></svg><div style="left:1021.3px;top:0;width:0.5px;height:22px;background:#5f7185"></div></div></div>

</div>
</body></html>
